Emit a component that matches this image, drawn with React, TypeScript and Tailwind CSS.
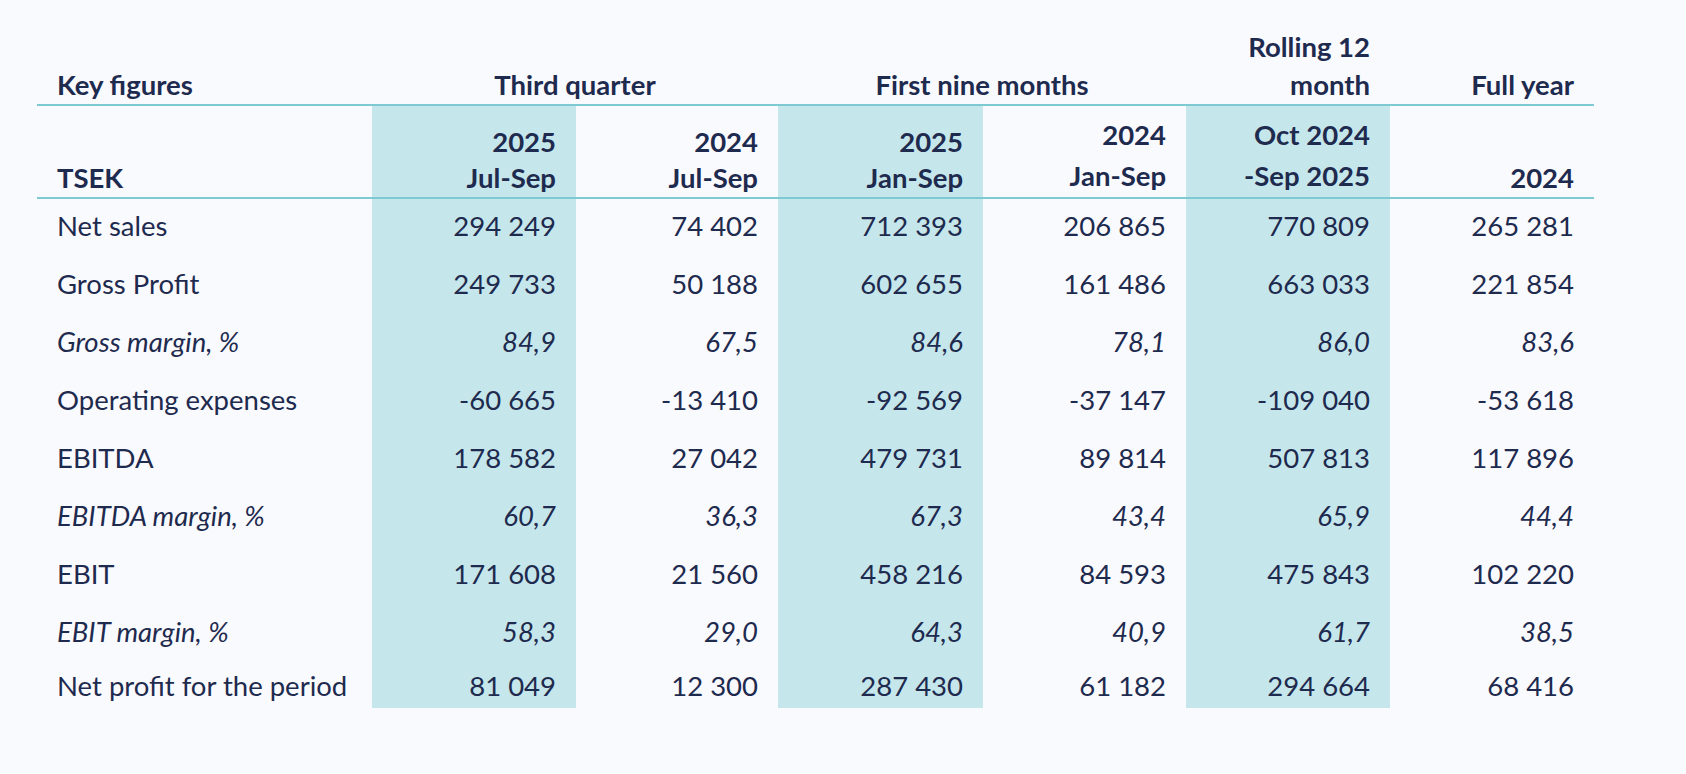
import React from "react";

interface Row {
  label: string;
  values: string[];
  italic?: boolean;
}

const rows: Row[] = [
  { label: "Net sales", values: ["294 249", "74 402", "712 393", "206 865", "770 809", "265 281"] },
  { label: "Gross Profit", values: ["249 733", "50 188", "602 655", "161 486", "663 033", "221 854"] },
  { label: "Gross margin, %", values: ["84,9", "67,5", "84,6", "78,1", "86,0", "83,6"], italic: true },
  { label: "Operating expenses", values: ["-60 665", "-13 410", "-92 569", "-37 147", "-109 040", "-53 618"] },
  { label: "EBITDA", values: ["178 582", "27 042", "479 731", "89 814", "507 813", "117 896"] },
  { label: "EBITDA margin, %", values: ["60,7", "36,3", "67,3", "43,4", "65,9", "44,4"], italic: true },
  { label: "EBIT", values: ["171 608", "21 560", "458 216", "84 593", "475 843", "102 220"] },
  { label: "EBIT margin, %", values: ["58,3", "29,0", "64,3", "40,9", "61,7", "38,5"], italic: true },
  { label: "Net profit for the period", values: ["81 049", "12 300", "287 430", "61 182", "294 664", "68 416"] },
];

const cols = "grid grid-cols-[335px_204px_202px_205px_203px_204px_204px]";
const teal = "bg-[#c5e7ec]";
const shaded = [true, false, true, false, true, false];

export default function App() {
  return (
    <div
      className="min-h-screen bg-[#f9fafe] text-[#1e2a4e] pl-[37px] text-[27.5px]"
      style={{ fontFamily: "Lato, 'Open Sans', sans-serif" }}
    >
      <div className="w-[1557px]">
        {/* group header */}
        <div className={`${cols} h-[106px] items-end font-bold border-b-2 border-[#7fc9d3] leading-[38px]`}>
          <div className="pl-5">Key figures</div>
          <div className="col-span-2 text-center">Third quarter</div>
          <div className="col-span-2 text-center">First nine months</div>
          <div className="text-right pr-5">
            Rolling 12
            <br />
            month
          </div>
          <div className="text-right pr-5">Full year</div>
        </div>

        {/* period header */}
        <div className={`${cols} border-b-2 border-[#7fc9d3] font-bold`}>
          <div className="h-[91px] flex items-end pl-5 pb-[1px] leading-[36px]">TSEK</div>
          <div className={`${teal} flex flex-col items-end justify-end pr-5 pb-[1px] leading-[36px]`}>
            <span>2025</span>
            <span>Jul-Sep</span>
          </div>
          <div className="flex flex-col items-end justify-end pr-5 pb-[1px] leading-[36px]">
            <span>2024</span>
            <span>Jul-Sep</span>
          </div>
          <div className={`${teal} flex flex-col items-end justify-end pr-5 pb-[1px] leading-[36px]`}>
            <span>2025</span>
            <span>Jan-Sep</span>
          </div>
          <div className="flex flex-col items-end justify-end pr-5 pb-[1px] leading-[41px]">
            <span>2024</span>
            <span>Jan-Sep</span>
          </div>
          <div className={`${teal} flex flex-col items-end justify-end pr-5 pb-[1px] leading-[41px]`}>
            <span>Oct 2024</span>
            <span>-Sep 2025</span>
          </div>
          <div className="flex flex-col items-end justify-end pr-5 pb-[1px] leading-[36px]">
            <span>2024</span>
          </div>
        </div>

        {/* body */}
        {rows.map((row, i) => {
          const last = i === rows.length - 1;
          return (
            <div key={row.label} className={`${cols} ${last ? "h-[45px]" : "h-[58px]"} ${row.italic ? "italic" : ""}`}>
              <div className={`pl-5 flex items-center ${last ? "" : "pb-[4px]"}`}>{row.label}</div>
              {row.values.map((v, j) => (
                <div
                  key={j}
                  className={`${shaded[j] ? teal : ""} flex items-center justify-end pr-5 ${last ? "" : "pb-[4px]"}`}
                >
                  {v}
                </div>
              ))}
            </div>
          );
        })}
      </div>
    </div>
  );
}
